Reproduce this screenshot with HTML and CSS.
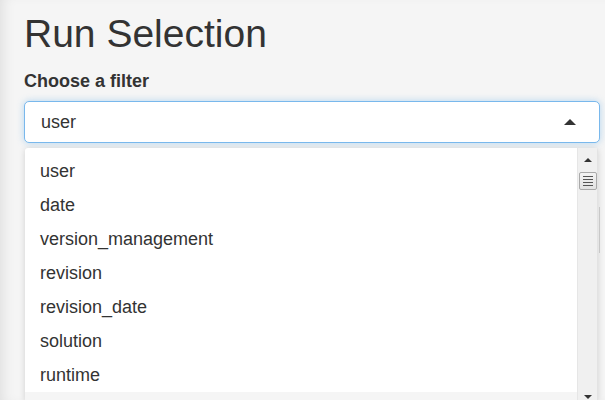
FILE: index.html
```html
<!DOCTYPE html>
<html>
<head>
<meta charset="utf-8">
<link rel="stylesheet" href="styles.css">
</head>
<body>
<div class="page">
  <h1 class="title">Run Selection</h1>
  <label class="label">Choose a filter</label>
  <div class="select">
    <span class="value">user</span>
    <span class="caret"></span>
  </div>
  <div class="dropdown">
    <ul class="options">
      <li class="opt">user</li>
      <li class="opt">date</li>
      <li class="opt">version_management</li>
      <li class="opt">revision</li>
      <li class="opt">revision_date</li>
      <li class="opt">solution</li>
      <li class="opt">runtime</li>
      <li class="opt active"></li>
    </ul>
    <div class="scrollbar">
      <div class="sb-btn"><span class="sb-up"></span></div>
      <div class="sb-thumb">
        <span class="grip"></span><span class="grip"></span><span class="grip"></span><span class="grip"></span>
      </div>
      <div class="sb-track"></div>
      <div class="sb-btn sb-bottom"><span class="sb-down"></span></div>
    </div>
  </div>
  <div class="behind-line"></div>
</div>
</body>
</html>
```
FILE: styles.css
```css
* { box-sizing: border-box; }
html, body {
  margin: 0;
  padding: 0;
  height: 400px;
  overflow: hidden;
  background: #f5f5f5;
}
.page {
  position: relative;
  height: 400px;
  padding-left: 24px;
  font-family: "Liberation Sans", Arial, sans-serif;
  color: #333;
  box-shadow: inset 10px 0 14px -8px rgba(0,0,0,0.10);
}
.title {
  margin: 0;
  padding-top: 12px;
  font-size: 39px;
  font-weight: normal;
  line-height: 43px;
}
.label {
  display: block;
  margin-top: 15px;
  font-size: 18px;
  font-weight: bold;
  line-height: 22px;
}
.select {
  margin-top: 9px;
  width: 576px;
  height: 42px;
  background: #fff;
  border: 1px solid #79b8ec;
  border-radius: 5px;
  box-shadow: 0 0 7px rgba(102,175,233,0.45);
  display: flex;
  align-items: center;
  justify-content: space-between;
  padding: 0 23px 0 16px;
  font-size: 18px;
}
.caret {
  width: 0;
  height: 0;
  border-left: 6px solid transparent;
  border-right: 6px solid transparent;
  border-bottom: 6px solid #333;
}
.dropdown {
  margin-top: 5px;
  margin-left: 1px;
  width: 573px;
  height: 252px;
  background: #fff;
  border-radius: 3px 3px 0 0;
  box-shadow: 0 1px 6px rgba(0,0,0,0.15);
  display: flex;
  border-right: 1px solid #e3e3e3;
}
.options {
  list-style: none;
  margin: 0;
  padding: 6px 0 0 0;
  flex: 1;
}
.opt {
  height: 34px;
  line-height: 34px;
  padding-left: 15px;
  font-size: 18px;
  color: #333;
}
.opt.active { background: #f5f5f5; height: 12px; }
.scrollbar {
  width: 20px;
  background: #f0f0f0;
  display: flex;
  flex-direction: column;
  align-items: center;
  border-left: 1px solid #e6e6e6;
}
.sb-btn {
  height: 22px;
  width: 100%;
  display: flex;
  align-items: center;
  justify-content: center;
  padding-top: 2px;
}
.sb-up {
  width: 0; height: 0;
  border-left: 4px solid transparent;
  border-right: 4px solid transparent;
  border-bottom: 4px solid #333;
}
.sb-down {
  width: 0; height: 0;
  border-left: 4px solid transparent;
  border-right: 4px solid transparent;
  border-top: 4px solid #333;
}
.sb-bottom { height: 8px; align-items: flex-start; padding-top: 3px; }
.sb-thumb {
  width: 18px;
  height: 18px;
  margin-top: 2px;
  border: 1px solid #a9a9a9;
  border-radius: 2px;
  background: linear-gradient(#f3f3f3, #e2e2e2);
  display: flex;
  flex-direction: column;
  justify-content: center;
  align-items: center;
  gap: 2px;
}
.grip {
  display: block;
  width: 10px;
  height: 1px;
  background: #555;
}
.sb-track { flex: 1; }
.behind-line {
  position: absolute;
  left: 599px;
  top: 207px;
  width: 1px;
  height: 46px;
  background: #c8c8c8;
}
```
